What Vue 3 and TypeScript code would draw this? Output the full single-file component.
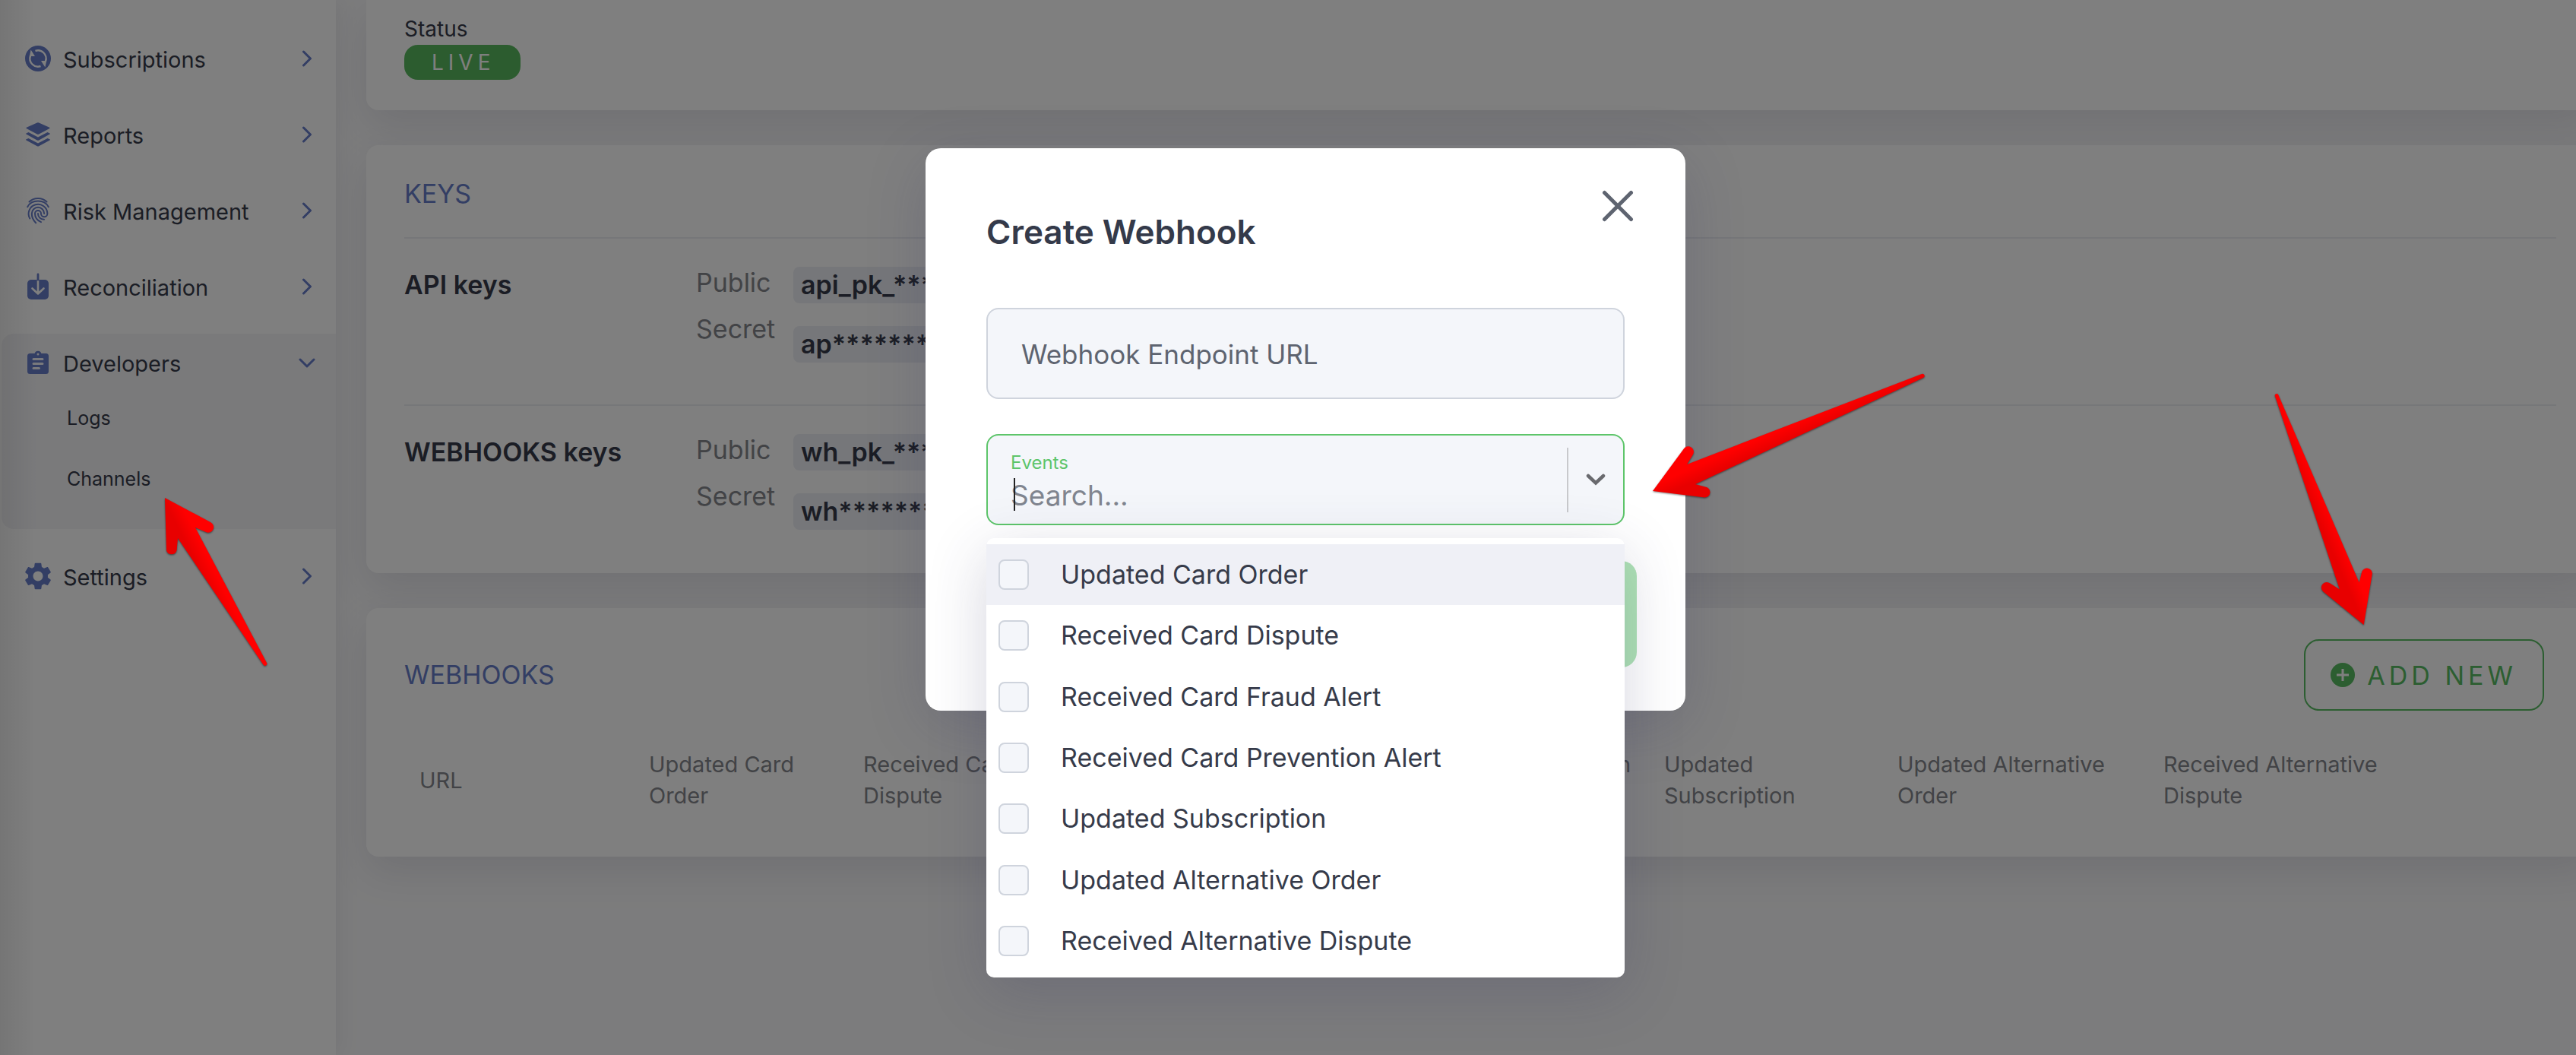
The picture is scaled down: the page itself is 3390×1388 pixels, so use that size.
<script setup lang="ts">
import { ref } from 'vue'

interface NavItem {
  label: string
  icon: 'subscriptions' | 'reports' | 'risk' | 'reconciliation' | 'developers' | 'settings'
  children?: string[]
}

interface KeyGroup {
  name: string
  publicKey: string
  secretKey: string
}

const navItems: NavItem[] = [
  { label: 'Subscriptions', icon: 'subscriptions' },
  { label: 'Reports', icon: 'reports' },
  { label: 'Risk Management', icon: 'risk' },
  { label: 'Reconciliation', icon: 'reconciliation' },
  { label: 'Developers', icon: 'developers', children: ['Logs', 'Channels'] },
  { label: 'Settings', icon: 'settings' },
]

const keyGroups: KeyGroup[] = [
  { name: 'API keys', publicKey: 'api_pk_****************', secretKey: 'ap********************' },
  { name: 'WEBHOOKS keys', publicKey: 'wh_pk_****************', secretKey: 'wh********************' },
]

const events: string[] = [
  'Updated Card Order',
  'Received Card Dispute',
  'Received Card Fraud Alert',
  'Received Card Prevention Alert',
  'Updated Subscription',
  'Updated Alternative Order',
  'Received Alternative Dispute',
]

const endpointUrl = ref('')
const search = ref('')
const selected = ref<string[]>([])
const active = ref(0)
</script>

<template>
  <div class="app">
    <nav class="sidebar" aria-label="Main">
      <div v-for="item in navItems" :key="item.label" class="nav-group" :class="{ open: item.children }">
        <button type="button" class="nav-item" :aria-expanded="!!item.children">
          <span class="nav-icon">
            <svg v-if="item.icon === 'subscriptions'" width="34" height="34" viewBox="0 0 34 34">
              <circle cx="17" cy="17" r="17" fill="currentColor" />
              <g fill="none" stroke="#fff" stroke-width="2.4">
                <path d="M7 13.5A10.6 10.6 0 0 0 20.5 27" />
                <path d="M27 20.5A10.6 10.6 0 0 0 13.5 7" />
              </g>
              <path d="M7.600 5.600 13 14H5.800ZM26.400 28.400 21 20h7.200Z" fill="#fff" />
            </svg>
            <svg v-else-if="item.icon === 'reports'" width="34" height="34" viewBox="0 0 34 34" fill="currentColor">
              <path d="M15.8 1.4a3 3 0 0 1 2.4 0l14 6.3q1 .6 0 1.2l-14 7.6a3 3 0 0 1-2.4 0l-14-7.6q-1-.6 0-1.2Z" />
              <path d="m1.500 15.400 3-1.400L17 20.600 29.500 14l3 1.400q1 .6 0 1.200L18.200 24.400a3 3 0 0 1-2.400 0L1.500 16.600q-1-.6 0-1.200Z" />
              <path d="m1.500 23.300 3-1.400L17 28.500l12.500-6.600 3 1.400q1 .6 0 1.200l-14.300 7.800a3 3 0 0 1-2.400 0L1.500 24.500q-1-.6 0-1.200Z" />
            </svg>
            <svg v-else-if="item.icon === 'risk'" width="30" height="36" viewBox="0 0 30 36" fill="none" stroke="currentColor" stroke-width="2" stroke-linecap="round">
              <path d="M3.500 6.500C9.500 .4 20.500 .4 26.500 6.500" />
              <path d="M1.200 13.200C6.500 3 23.500 3 28.800 13.200" />
              <path d="M4.300 28.500A12.400 12.400 0 1 1 27.400 22a4.200 4.200 0 0 1-8.400 0a4 4 0 0 0-8 0c0 5 3 9 8 11.200" />
              <path d="M12.200 34.200C9 31 6.800 26.500 6.800 22a8.200 8.200 0 0 1 16.400 0" />
              <path d="M15 22c0 4 3 7.800 8 7.800" />
            </svg>
            <svg v-else-if="item.icon === 'reconciliation'" width="30" height="36" viewBox="0 0 30 36">
              <rect x="1" y="9" width="28" height="26" rx="5" fill="currentColor" />
              <path d="M15 10V27M7.500 20.500 15 27.500l7.500-7" fill="none" stroke="#fff" stroke-width="2.600" stroke-linecap="round" stroke-linejoin="round" />
              <path d="M15 2v7" stroke="currentColor" stroke-width="2.800" stroke-linecap="round" />
            </svg>
            <svg v-else-if="item.icon === 'developers'" width="30" height="32" viewBox="0 0 30 32">
              <path d="M4.500 4h6.200a4.500 4.500 0 0 1 8.600 0h6.200Q29 4 29 7.500v20q0 3.500-3.500 3.500h-21Q1 31 1 27.500v-20Q1 4 4.500 4Z" fill="currentColor" />
              <circle cx="15" cy="5" r="1.500" fill="#f2f2f8" />
              <path d="M9 11.500h12M9 17.500h12M9 23.500h7.500" stroke="#f2f2f8" stroke-width="3" stroke-linecap="round" />
            </svg>
            <svg v-else width="36" height="36" viewBox="2 2 20 20" fill="currentColor">
              <path d="M19.140 12.940c.04-.3.060-.610.060-.940 0-.320-.020-.640-.070-.940l2.030-1.580c.180-.140.230-.410.120-.610l-1.920-3.320c-.120-.220-.370-.290-.590-.220l-2.390.960c-.500-.380-1.030-.700-1.620-.940l-.360-2.540c-.040-.240-.240-.410-.480-.410h-3.840c-.240 0-.430.170-.470.410l-.360 2.540c-.590.240-1.130.570-1.620.940l-2.390-.960c-.220-.080-.470 0-.590.220L2.740 8.870c-.120.210-.080.470.120.610l2.030 1.580c-.050.300-.090.630-.090.940s.020.640.070.940l-2.030 1.580c-.180.140-.230.410-.120.610l1.920 3.320c.120.220.370.290.590.220l2.390-.960c.500.380 1.030.700 1.620.940l.360 2.540c.050.240.240.410.480.410h3.840c.240 0 .440-.170.470-.410l.360-2.540c.590-.240 1.130-.560 1.620-.940l2.390.960c.220.080.470 0 .590-.220l1.920-3.320c.120-.220.070-.470-.120-.610l-2.010-1.580zM12 15.600c-1.980 0-3.600-1.620-3.600-3.600s1.620-3.600 3.600-3.600 3.600 1.620 3.600 3.600-1.620 3.600-3.600 3.600z" />
            </svg>
          </span>
          <span class="nav-label">{{ item.label }}</span>
          <svg class="nav-chevron" width="22" height="22" viewBox="0 0 22 22" fill="none" stroke="currentColor" stroke-width="3" stroke-linecap="round" stroke-linejoin="round">
            <path v-if="item.children" d="M2 7l9 9 9-9" />
            <path v-else d="M6.500 2l9 9-9 9" />
          </svg>
        </button>
        <div v-if="item.children" class="nav-children">
          <a v-for="child in item.children" :key="child" href="#" class="nav-child">{{ child }}</a>
        </div>
      </div>
    </nav>

    <main class="content">
      <section class="card status-card">
        <span class="status-label">Status</span>
        <span class="status-pill">LIVE</span>
      </section>

      <section class="card keys-card">
        <h2 class="card-title">KEYS</h2>
        <div v-for="group in keyGroups" :key="group.name" class="key-row">
          <h3 class="key-name">{{ group.name }}</h3>
          <div class="key-labels">
            <span>Public</span>
            <span>Secret</span>
          </div>
          <div class="key-values">
            <code class="key-value">{{ group.publicKey }}</code>
            <code class="key-value">{{ group.secretKey }}</code>
          </div>
        </div>
      </section>

      <section class="card hooks-card">
        <header class="hooks-header">
          <h2 class="card-title">WEBHOOKS</h2>
          <button type="button" class="add-button">
            <svg width="32" height="32" viewBox="0 0 32 32">
              <circle cx="16" cy="16" r="16" fill="currentColor" />
              <path d="M16 8v16M8 16h16" stroke="#fff" stroke-width="3" />
            </svg>
            ADD NEW
          </button>
        </header>
        <table class="hooks-table">
          <colgroup>
            <col class="col-url" />
            <col class="col-order" />
            <col class="col-dispute" />
            <col class="col-fraud" />
            <col class="col-prevention" />
            <col class="col-subscription" />
            <col class="col-alt" />
            <col class="col-alt" />
            <col />
          </colgroup>
          <thead>
            <tr>
              <th scope="col">URL</th>
              <th v-for="event in events" :key="event" scope="col">{{ event }}</th>
              <td></td>
            </tr>
          </thead>
        </table>
      </section>
    </main>

    <div class="overlay">
      <div class="modal" role="dialog" aria-modal="true" aria-labelledby="modal-title">
        <header class="modal-header">
          <h1 id="modal-title" class="modal-title">Create Webhook</h1>
          <button type="button" class="close-button" aria-label="Close">
            <svg width="44" height="44" viewBox="0 0 44 44" fill="none" stroke="currentColor" stroke-width="5" stroke-linecap="round">
              <path d="M4.500 4.500l35 35M39.500 4.500l-35 35" />
            </svg>
          </button>
        </header>

        <input v-model="endpointUrl" class="url-input" type="url" placeholder="Webhook Endpoint URL" aria-label="Webhook Endpoint URL" />

        <div class="select">
          <div class="select-control">
            <div class="select-field">
              <label class="select-label" for="event-search">Events</label>
              <input id="event-search" v-model="search" class="select-input" type="text" placeholder="Search..." autocomplete="off" />
              <span class="caret"></span>
            </div>
            <span class="select-separator"></span>
            <button type="button" class="select-toggle" aria-label="Toggle events">
              <svg width="26" height="16" viewBox="0 0 26 16" fill="none" stroke="currentColor" stroke-width="4.500" stroke-linecap="round">
                <path d="M3 3l10 9.500L23 3" />
              </svg>
            </button>
          </div>
          <div class="options">
            <label v-for="(event, index) in events" :key="event" class="option" :class="{ active: index === active }" @mouseenter="active = index">
              <input v-model="selected" class="option-box" type="checkbox" :value="event" />
              <span>{{ event }}</span>
            </label>
          </div>
        </div>

        <button type="button" class="submit-button" aria-label="Create" disabled></button>
      </div>
    </div>

    <svg class="arrow arrow-channels" width="150" height="240" viewBox="210 645 150 240">
      <defs>
        <linearGradient id="shade-channels" gradientUnits="userSpaceOnUse" x1="240" y1="706" x2="256" y2="698">
          <stop offset="0" stop-color="#e80000" />
          <stop offset="1" stop-color="#f00" />
        </linearGradient>
      </defs>
      <path d="M217 655 277 687A7 7 0 0 1 271 700L257 694 351 872A2.500 2.500 0 0 1 346.500 874.500L234 708 232.600 724A7 7 0 0 1 219 724Z" fill="url(#shade-channels)" />
    </svg>
    <svg class="arrow arrow-events" width="370" height="180" viewBox="2170 485 370 180">
      <defs>
        <linearGradient id="shade-events" gradientUnits="userSpaceOnUse" x1="2231" y1="633" x2="2224" y2="617">
          <stop offset="0" stop-color="#e80000" />
          <stop offset="1" stop-color="#f00" />
        </linearGradient>
      </defs>
      <path d="M2175 646 2215.500 591A7 7 0 0 1 2228 598L2220 611 2529 492A2.500 2.500 0 0 1 2531 497L2231 637 2244 640.500A7 7 0 0 1 2243 654.500Z" fill="url(#shade-events)" />
    </svg>
    <svg class="arrow arrow-add" width="140" height="320" viewBox="2988 512 140 320">
      <defs>
        <linearGradient id="shade-add" gradientUnits="userSpaceOnUse" x1="3078" y1="747" x2="3094" y2="740">
          <stop offset="0" stop-color="#e80000" />
          <stop offset="1" stop-color="#f00" />
        </linearGradient>
      </defs>
      <path d="M3110.700 822 3121.800 755A7 7 0 0 0 3108.300 752L3104.700 766.500 2998.300 519.500A2.300 2.300 0 0 0 2994 521.500L3079 775.500 3066.500 767.500A7 7 0 0 0 3057.500 778.500Z" fill="url(#shade-add)" />
    </svg>
  </div>
</template>

<style>
body {
  margin: 0;
  background: #f9f9fa;
}
</style>

<style scoped>
.app {
  position: relative;
  display: flex;
  min-height: 100vh;
  overflow: hidden;
  background: #f9f9fa;
  color: #363b4a;
  font-family: Inter, "Liberation Sans", sans-serif;
}

.app *,
.app *::before {
  box-sizing: border-box;
}

button,
input {
  margin: 0;
  font: inherit;
}

h1,
h2,
h3 {
  margin: 0;
}

/* Sidebar */
.sidebar {
  position: relative;
  z-index: 1;
  display: flex;
  flex: none;
  flex-direction: column;
  gap: 24px;
  width: 442px;
  padding-top: 39px;
  background: linear-gradient(90deg, rgba(0, 0, 0, 0.08), rgba(0, 0, 0, 0) 48px), #fff;
  box-shadow: 0 0 30px rgba(50, 50, 93, 0.1);
}

.nav-group {
  padding-left: 2px;
}

.nav-group.open {
  margin-left: 2px;
  padding-left: 0;
  border-radius: 16px 0 0 16px;
  background: rgba(60, 60, 120, 0.06);
}

.nav-item {
  display: flex;
  align-items: center;
  width: 100%;
  height: 76px;
  padding: 0 27px 0 30px;
  border: 0;
  background: none;
  color: inherit;
  text-align: left;
  cursor: pointer;
}

.nav-icon {
  display: flex;
  justify-content: center;
  width: 36px;
  margin-right: 15px;
  color: #667cc8;
}

.nav-label {
  flex: 1;
  padding-top: 3px;
  font-size: 29px;
  line-height: 40px;
}

.nav-chevron {
  color: #667cc8;
}

.nav-children {
  display: flex;
  flex-direction: column;
  gap: 10px;
  padding: 0 0 31px 86px;
}

.nav-child {
  color: inherit;
  font-size: 25px;
  line-height: 70px;
  text-decoration: none;
}

/* Page */
.content {
  display: flex;
  flex: 1;
  flex-direction: column;
  gap: 46px;
  min-width: 0;
  margin-right: -24px;
  padding: 0 0 60px 40px;
}

.card {
  padding: 0 50px;
  border-radius: 16px;
  background: #fff;
  box-shadow: 0 20px 54px rgba(50, 50, 93, 0.12);
}

.status-card {
  display: flex;
  flex-direction: column;
  align-items: flex-start;
  padding-top: 17px;
  padding-bottom: 40px;
  border-radius: 0 0 16px 16px;
}

.status-label {
  font-size: 28px;
  line-height: 42px;
}

.status-pill {
  padding: 0 33px 0 36px;
  border-radius: 18px;
  background: #58b85e;
  color: #fff;
  font-size: 28px;
  letter-spacing: 6px;
  line-height: 46px;
}

.card-title {
  color: #667cc8;
  font-size: 34px;
  font-weight: 400;
  line-height: 48px;
}

.keys-card {
  padding-top: 40px;
  padding-bottom: 2px;
}

.keys-card .card-title {
  margin-bottom: 33px;
}

.key-row {
  display: grid;
  grid-template-columns: 384px 128px 1fr;
  padding: 27px 0 55px;
  border-top: 2px solid #eceef2;
}

.key-name,
.key-values {
  padding-top: 10px;
}

.key-name {
  font-size: 34px;
  font-weight: 600;
  line-height: 48px;
}

.key-labels {
  display: flex;
  flex-direction: column;
  color: #84868c;
  font-size: 34px;
  line-height: 61px;
}

.key-values {
  display: flex;
  flex-direction: column;
  align-items: flex-start;
  gap: 30px;
}

.key-value {
  padding: 0 10px;
  border-radius: 8px;
  background: #eceef4;
  font-family: inherit;
  font-size: 34px;
  font-weight: 600;
  line-height: 48px;
}

.hooks-card {
  padding-top: 41px;
  padding-bottom: 30px;
}

.hooks-header {
  display: flex;
  align-items: center;
  justify-content: space-between;
  margin-bottom: 20px;
  padding-right: 16px;
}

.add-button {
  display: flex;
  align-items: center;
  gap: 16px;
  height: 94px;
  padding: 0 34px 0 33px;
  border: 2px solid #58bc62;
  border-radius: 20px;
  background: none;
  color: #58bc62;
  font-size: 34px;
  letter-spacing: 5px;
  cursor: pointer;
}

.hooks-table {
  width: 100%;
  border-collapse: collapse;
  table-layout: fixed;
}

.hooks-table th {
  padding: 30px 20px;
  color: #84868c;
  font-size: 29px;
  font-weight: 400;
  line-height: 41px;
  text-align: left;
}

.col-url { width: 302px; }
.col-order { width: 282px; }
.col-dispute { width: 300px; }
.col-fraud { width: 356px; }
.col-prevention { width: 398px; }
.col-subscription { width: 307px; }
.col-alt { width: 350px; }

/* Modal */
.overlay {
  position: absolute;
  z-index: 2;
  inset: 0;
  display: flex;
  align-items: flex-start;
  justify-content: center;
  padding: 195px 0 0 46px;
  background: rgba(0, 0, 0, 0.5);
}

.modal {
  display: flex;
  flex-direction: column;
  width: 1000px;
  max-width: 100%;
  padding: 50px 80px 57px;
  border-radius: 20px;
  background: #fff;
  box-shadow: 0 20px 80px rgba(50, 50, 93, 0.2);
}

.modal-header {
  display: flex;
  align-items: flex-start;
  justify-content: space-between;
  margin-bottom: 70px;
}

.modal-title {
  padding-top: 30px;
  color: #343a4a;
  font-size: 44px;
  font-weight: 600;
  line-height: 60px;
}

.close-button {
  display: flex;
  margin-right: -17px;
  padding: 4px;
  border: 0;
  background: none;
  color: #5e6470;
  cursor: pointer;
}

.url-input {
  height: 120px;
  margin-bottom: 46px;
  padding: 2px 44px 0;
  border: 2px solid #cfd4dd;
  border-radius: 16px;
  outline: 0;
  background: #f4f6fa;
  color: #343a4a;
  font-size: 35px;
}

.url-input::placeholder {
  color: #5e6470;
  opacity: 1;
}

.select {
  position: relative;
  margin-bottom: 47px;
}

.select-control {
  display: flex;
  align-items: center;
  height: 120px;
  border: 2px solid #5dc56a;
  border-radius: 16px;
  background: #f4f6fa;
}

.select-field {
  position: relative;
  display: flex;
  flex: 1;
  flex-direction: column;
  padding: 4px 0 0 30px;
}

.select-label {
  color: #5dc56a;
  font-size: 24px;
  line-height: 36px;
}

.select-input {
  width: 100%;
  height: 48px;
  padding: 0;
  border: 0;
  outline: 0;
  background: none;
  color: #343a4a;
  font-size: 37px;
}

.select-input::placeholder {
  color: #80858f;
  opacity: 1;
}

.caret {
  position: absolute;
  bottom: 3px;
  left: 34px;
  width: 2px;
  height: 43px;
  background: #222;
}

.select-separator {
  width: 2px;
  height: 85px;
  background: #c8c9cc;
}

.select-toggle {
  display: flex;
  justify-content: center;
  width: 72px;
  padding: 0;
  border: 0;
  background: none;
  color: #696a6e;
  cursor: pointer;
}

.options {
  position: absolute;
  z-index: 1;
  top: calc(100% + 17px);
  right: 0;
  left: 0;
  display: grid;
  grid-auto-rows: 1fr;
  min-height: 578px;
  padding: 8px 0;
  border-radius: 10px;
  background: #fff;
  box-shadow: 0 20px 80px rgba(50, 50, 93, 0.2);
}

.option {
  display: flex;
  align-items: center;
  gap: 42px;
  padding-left: 16px;
  font-size: 34px;
  line-height: 48px;
  cursor: pointer;
}

.option.active {
  background: #eff0f6;
}

.option-box {
  width: 40px;
  height: 40px;
  border: 2px solid #cfd4dd;
  border-radius: 8px;
  background: #f4f6fa;
  appearance: none;
}

.submit-button {
  align-self: flex-end;
  width: 420px;
  height: 140px;
  margin-right: -16px;
  border: 0;
  border-radius: 20px;
  background: #aee2b5;
}

/* Annotations */
.arrow {
  position: absolute;
  z-index: 3;
  filter: drop-shadow(0 1px 1px rgba(0, 0, 0, 0.5));
}

.arrow-channels {
  top: 645px;
  left: 210px;
}

.arrow-events {
  top: 485px;
  left: calc(50% + 475px);
}

.arrow-add {
  top: 512px;
  right: 262px;
}
</style>
